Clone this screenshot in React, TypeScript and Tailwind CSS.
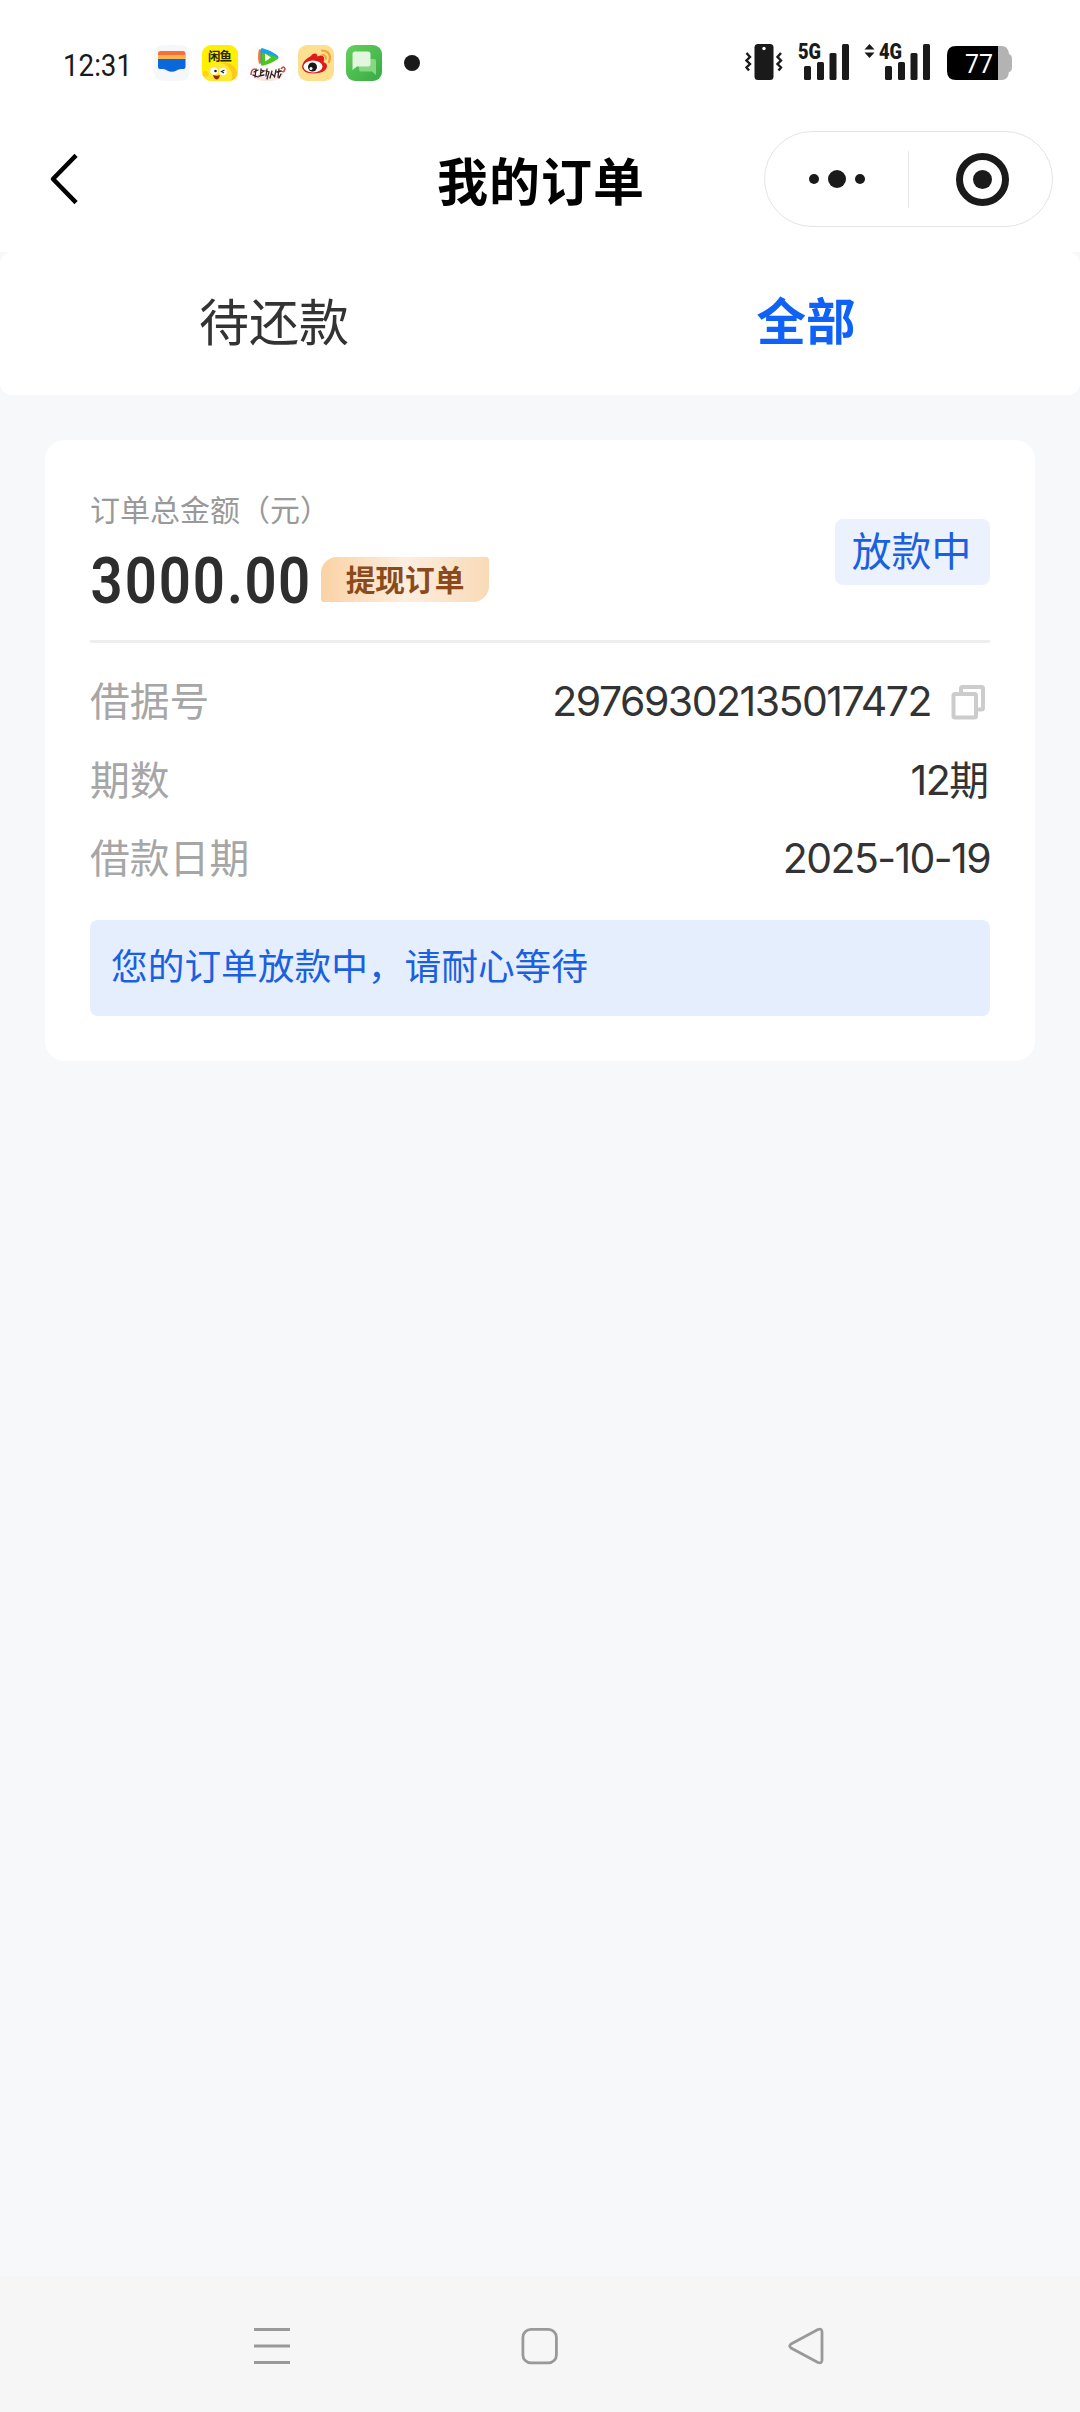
import React, { useState } from 'react';

interface DetailRowProps {
  label: string;
  children: React.ReactNode;
}

const DetailRow: React.FC<DetailRowProps> = ({ label, children }) => {
  return (
    <div className="flex h-[78.5px] items-center justify-between text-[39.8px] leading-none">
      <span className="text-[#a6a6a6]">{label}</span>
      <div className="flex items-center text-[#333333]">{children}</div>
    </div>
  );
};

interface SignalProps {
  label: string;
  arrows?: boolean;
}

const Signal: React.FC<SignalProps> = ({ label, arrows }) => {
  return (
    <svg width="70" height="50" viewBox="0 -10 70 50" fill="#1a1a1a">
      {arrows && <path d="M0.500 7.500 L5.500 2 L10.500 7.500 Z M0.500 10.500 H10.500 L5.500 16 Z" />}
      <text
        x="15"
        y="17"
        fontSize="22"
        fontWeight="900"
        textLength="23"
        lengthAdjust="spacingAndGlyphs"
        className="font-['Roboto',sans-serif]"
      >
        {label}
      </text>
      <rect x="21" y="24" width="7" height="14" rx="1.5" />
      <rect x="34" y="20" width="7" height="18" rx="1.5" />
      <rect x="46.5" y="11" width="7" height="27" rx="1.5" />
      <rect x="59" y="2" width="7" height="36" rx="1.5" />
    </svg>
  );
};

const WalletIcon = () => (
  <svg width="36" height="36" viewBox="0 0 36 36">
    <rect width="36" height="36" rx="9" fill="#f5f8fb" />
    <path d="M4 13 V8.5 Q4 6 6.500 6 H29 Q31.500 6 31.500 8.500 V13 Z" fill="#f5703a" />
    <rect x="4" y="10" width="27.500" height="4.500" fill="#fdb54a" />
    <path d="M4 14 H31.500 V22 Q31.500 24 29.500 24 H27 Q24.500 24 22.500 25.500 Q18 28 13 25.500 Q11.500 24 9 24 H6 Q4 24 4 22 Z" fill="#0b67dc" />
  </svg>
);

const XianyuIcon = () => (
  <svg width="36" height="36" viewBox="0 0 36 36">
    <defs>
      <clipPath id="xianyu">
        <rect width="36" height="36" rx="9" />
      </clipPath>
    </defs>
    <g clipPath="url(#xianyu)">
      <rect width="36" height="36" fill="#fff000" />
      <circle cx="22" cy="31" r="13.500" fill="#ffc81a" />
      <circle cx="17" cy="31" r="13" fill="#ffea2e" />
      <circle cx="3.500" cy="29" r="3" fill="#ffd21a" />
      <circle cx="12" cy="26" r="3.800" fill="#fff" />
      <circle cx="21" cy="26.500" r="3.800" fill="#fff" />
      <circle cx="13.500" cy="26" r="1.300" fill="#222" />
      <path d="M22.500 25 L19.500 26.500 L22 28" fill="none" stroke="#222" strokeWidth="1.200" />
      <path d="M11 30 Q15 31.500 18 30 Q17 34.500 14.500 34.500 Q12 34 11 30 Z" fill="#a3211b" />
      <text x="6" y="15.500" fontSize="12.500" fontWeight="700" textLength="24" fill="#2b2500" className="font-['Noto_Sans_CJK_SC',sans-serif]">
        闲鱼
      </text>
    </g>
  </svg>
);

const VideoIcon = () => (
  <svg width="36" height="36" viewBox="0 0 36 36">
    <rect width="36" height="36" rx="9" fill="#fffcfc" />
    <path d="M2 27 Q8 33 18 32 Q28 33 33 27 V31 Q28 36 18 36 Q7 36 2 31 Z" fill="#fbe3df" />
    <path d="M9 4 Q7 12 9 19 L13 17 V6 Z" fill="#ff7a1c" />
    <path d="M12 3 Q10.500 3 10.500 7 V18 Q11 21 13 20.500 L27 14.500 Q30 12.500 27 10 Q20 5 12 3 Z" fill="#13a4f0" />
    <path d="M11 20.500 Q12 15 12 8 Q21 9 28 13 Q22 19.500 11 20.500 Z" fill="#4cc61c" />
    <path d="M15 8.500 L21 12.500 L15 16.500 Z" fill="#fff" />
    <path d="M1 30 Q1 24 5 24 M31 24 Q34 20 35 24 Q34 28 31 26" fill="none" stroke="#c34a48" strokeWidth="1.500" />
    <path d="M4 27 L8 25 M6 24 L5 32 M3 30 L8 32 M11 24 L10.500 30 M11 25 L14 26 L11 28 M9 31 L14 30 M17 24 L16 31 M16 26 L19 27 L17 34 M22 26 L20 33 M22 29 L24 31 M26 25 L24.500 32 M29 24 L28 32 M27 27 L31 26 M31 29 L29 33" stroke="#33201f" strokeWidth="1.300" fill="none" strokeLinecap="round" />
  </svg>
);

const WeiboIcon = () => (
  <svg width="36" height="36" viewBox="0 0 36 36">
    <rect width="36" height="36" rx="9" fill="#fde08f" />
    <path d="M13 11 Q14 8 17.500 8.500 Q19.500 9 19.500 11.500 Q24.500 9 26 12.500 Q26.500 15 25.500 17 Q29.500 18.500 29 22 Q27 28.500 15.500 28.500 Q4 28 4 21.500 Q5 15 13 11 Z" fill="#e0191b" />
    <ellipse cx="15" cy="21.500" rx="9.500" ry="6" fill="#fff" />
    <circle cx="14.500" cy="22" r="4.500" fill="#181818" />
    <circle cx="13" cy="23.500" r="1.500" fill="#fff" />
    <path d="M24 5.500 Q31 5.500 32 12 Q32 14.500 31 17" fill="none" stroke="#f5a13a" strokeWidth="2.200" strokeLinecap="round" />
    <path d="M24 10 Q28 9.500 28 14" fill="none" stroke="#f5a13a" strokeWidth="1.800" strokeLinecap="round" />
  </svg>
);

const MessageIcon = () => (
  <svg width="36" height="36" viewBox="0 0 36 36">
    <defs>
      <linearGradient id="message" x1="0" y1="0" x2="1" y2="1">
        <stop offset="0" stopColor="#66d05d" />
        <stop offset="1" stopColor="#35ab43" />
      </linearGradient>
    </defs>
    <rect width="36" height="36" rx="9" fill="url(#message)" />
    <path d="M13 14 H28 Q30 14 30 16 V30 L26 26.500 H15 Q13 26.500 13 24.500 Z" fill="#86d684" />
    <path d="M9 6.500 H22 Q24.500 6.500 24.500 9 V19 Q24.500 21.500 22 21.500 H11 L6.500 25 V9 Q6.500 6.500 9 6.500 Z" fill="#e2f6e0" />
  </svg>
);

const StatusBar = () => (
  <div className="flex h-[125px] items-start justify-between pl-[60px] pr-[66px] pt-8">
    <div className="flex h-[62px] items-center">
      <svg width="76" height="54" viewBox="0 -6 76 54" fill="#1a1a1a">
        <text x="3" y="34" fontSize="31" textLength="69" lengthAdjust="spacingAndGlyphs" className="font-['Roboto',sans-serif]">
          12:31
        </text>
      </svg>
      <div className="ml-[18px] flex gap-3">
        <WalletIcon />
        <XianyuIcon />
        <VideoIcon />
        <WeiboIcon />
        <MessageIcon />
      </div>
      <div className="ml-[22px] size-4 rounded-full bg-[#1a1a1a]" />
    </div>

    <div className="flex items-end">
      <svg width="38" height="40" viewBox="0 0 38 40">
        <rect x="9.500" y="2" width="19" height="36" rx="3.500" fill="#1a1a1a" />
        <circle cx="19" cy="6.500" r="1.700" fill="#fff" />
        <path d="M1.500 11 L5 15 L1.500 18.500 L5 22 L1.500 25.500 L4 28.500 M36 11 L32.500 15 L36 18.500 L32.500 22 L36 25.500 L33.500 28.500" fill="none" stroke="#1a1a1a" strokeWidth="2.400" />
      </svg>
      <div className="flex">
        <Signal label="5G" />
        <div className="ml-[11px]">
          <Signal label="4G" arrows />
        </div>
      </div>
      <svg width="67" height="40" viewBox="0 0 67 40" className="ml-[13px]">
        <path d="M50 4 H55 Q61 4 62 12 Q65 13 65 17 V25 Q65 29.500 62 30 Q61 38 55 38 H50 Z" fill="#b3b3b3" />
        <path d="M9 4 H51 V38 H9 Q0 38 0 29 V13 Q0 4 9 4 Z" fill="#000" />
        <text x="18" y="30.500" fontSize="26" textLength="28" lengthAdjust="spacingAndGlyphs" fill="#fff" className="font-['Roboto',sans-serif]">
          77
        </text>
      </svg>
    </div>
  </div>
);

const Header = () => (
  <div className="grid h-[127px] grid-cols-[270px_1fr_270px] items-start pt-1.5">
    <button className="flex h-24 items-center pl-[49px]">
      <svg width="32" height="54" viewBox="0 0 32 54" fill="none" stroke="#000" strokeWidth="4.500" strokeLinecap="square" strokeLinejoin="round">
        <path d="M25.500 5 L4 27 L25.500 49" />
      </svg>
    </button>
    <h1 className="flex h-24 items-center justify-center pl-0.5 pt-1.5 text-[51px] font-bold leading-none tracking-[1px] text-black">
      我的订单
    </h1>
    <div className="-ml-[46px] flex h-24 w-[289px] items-center rounded-full border border-[#e4e4e4]">
      <div className="flex w-[143px] items-center justify-center gap-[9px]">
        <span className="size-[10px] rounded-full bg-[#1a1a1a]" />
        <span className="size-[18px] rounded-full bg-[#1a1a1a]" />
        <span className="size-[10px] rounded-full bg-[#1a1a1a]" />
      </div>
      <div className="h-[57px] w-px bg-[#e6e6e6]" />
      <div className="flex flex-1 justify-center pl-1">
        <div className="flex size-[53px] items-center justify-center rounded-full border-[7px] border-[#1a1a1a]">
          <span className="size-[19px] rounded-full bg-[#1a1a1a]" />
        </div>
      </div>
    </div>
  </div>
);

const tabs = ['待还款', '全部'];

const App: React.FC = () => {
  const [activeTab, setActiveTab] = useState('全部');

  return (
    <div className="flex h-[2412px] w-[1080px] flex-col bg-[#f7f8fa] font-['Inter','Noto_Sans_CJK_SC',sans-serif]">
      <div className="bg-white">
        <StatusBar />
        <Header />
      </div>

      <div className="flex h-[143px] rounded-xl bg-white px-2">
        {tabs.map((tab) => (
          <button
            key={tab}
            onClick={() => setActiveTab(tab)}
            className={
              activeTab === tab
                ? 'flex-1 pb-0.5 text-[49.5px] font-bold leading-none text-[#0f62f5]'
                : 'flex-1 pb-0.5 text-[50px] leading-none text-[#333333]'
            }
          >
            {tab}
          </button>
        ))}
      </div>

      <main className="flex-1 px-[45px] pt-[45px]">
        <section className="h-[621px] rounded-[20px] bg-white px-[45px] pt-[50px]">
          <div className="flex h-[153px] items-start justify-between border-b-[3px] border-[#eeeeee]">
            <div>
              <p className="h-[42px] text-[30px] leading-[41px] text-[#999999]">订单总金额（元）</p>
              <div className="flex h-[94px] items-center">
                <svg width="228" height="80" viewBox="0 -10 228 80">
                  {/* condensed digits with a wide decimal point */}
                  <text
                    x="0.6 39.5 78 116.8 155.7 175.5 213.7"
                    y="53.5"
                    fontSize="64"
                    transform="scale(0.88 1)"
                    fill="#2e2e2e"
                    className="font-['Roboto',sans-serif] font-semibold"
                  >
                    3000.00
                  </text>
                </svg>
                <span className="ml-[3px] flex h-[45px] w-[168px] items-center justify-center rounded-[3px] rounded-br-2xl rounded-tl-2xl bg-linear-to-r from-[#fad2a4] via-[#fdeedf] to-[#f9dab6] pt-1 text-[29.7px] font-semibold leading-none text-[#8a4a1c]">
                  提现订单
                </span>
              </div>
            </div>
            <span className="mt-[29px] flex h-[66px] w-[155px] items-center justify-center rounded-lg bg-[#ebf1fd] pr-0.5 text-[39.8px] leading-none text-[#1a60e0]">
              放款中
            </span>
          </div>

          <div className="pt-5">
            <DetailRow label="借据号">
              <span className="pb-0.5 text-[41px] tracking-[-1.5px]">29769302135017472</span>
              <svg width="36" height="36" viewBox="0 0 36 36" fill="none" stroke="#cccccc" strokeWidth="4" className="ml-5 mr-[3px]">
                <rect x="2.500" y="10" width="22.500" height="23.500" rx="1.500" />
                <path d="M10 9.500 V4.500 Q10 3 11.500 3 H30.500 Q32 3 32 4.500 V24 Q32 25.500 30.500 25.500 H26" />
              </svg>
            </DetailRow>
            <DetailRow label="期数">
              <span className="text-[41px] tracking-[-1.5px]">12</span>
              <span className="pr-px">期</span>
            </DetailRow>
            <DetailRow label="借款日期">
              <span className="pb-0.5 text-[41px] tracking-[-1.6px]">2025-10-19</span>
            </DetailRow>
          </div>

          <div className="mt-[21px] flex h-24 items-center rounded-lg bg-[#e5eefc] px-[21px] text-[36.7px] leading-none text-[#1a60e0]">
            您的订单放款中，请耐心等待
          </div>
        </section>
      </main>

      <nav className="flex h-[136px] items-center justify-between bg-[#f6f6f6] pl-[254px] pr-[256px] pt-[3px]">
        <svg width="36" height="38" viewBox="0 0 36 38" fill="#999999">
          <rect y="1" width="36" height="3" />
          <rect y="17.500" width="36" height="3" />
          <rect y="34" width="36" height="3" />
        </svg>
        <svg width="38" height="38" viewBox="0 0 38 38" fill="none" stroke="#999999" strokeWidth="2.800">
          <rect x="2.900" y="2.400" width="33.500" height="33.500" rx="8" />
        </svg>
        <svg width="36" height="38" viewBox="0 0 36 38" fill="none" stroke="#999999" strokeWidth="2.800" strokeLinejoin="round">
          <path d="M30 2.500 Q34 1 34 5 V33 Q34 37 30 35.500 L3 21 Q0.500 19 3 17 Z" />
        </svg>
      </nav>
    </div>
  );
};

export default App;
